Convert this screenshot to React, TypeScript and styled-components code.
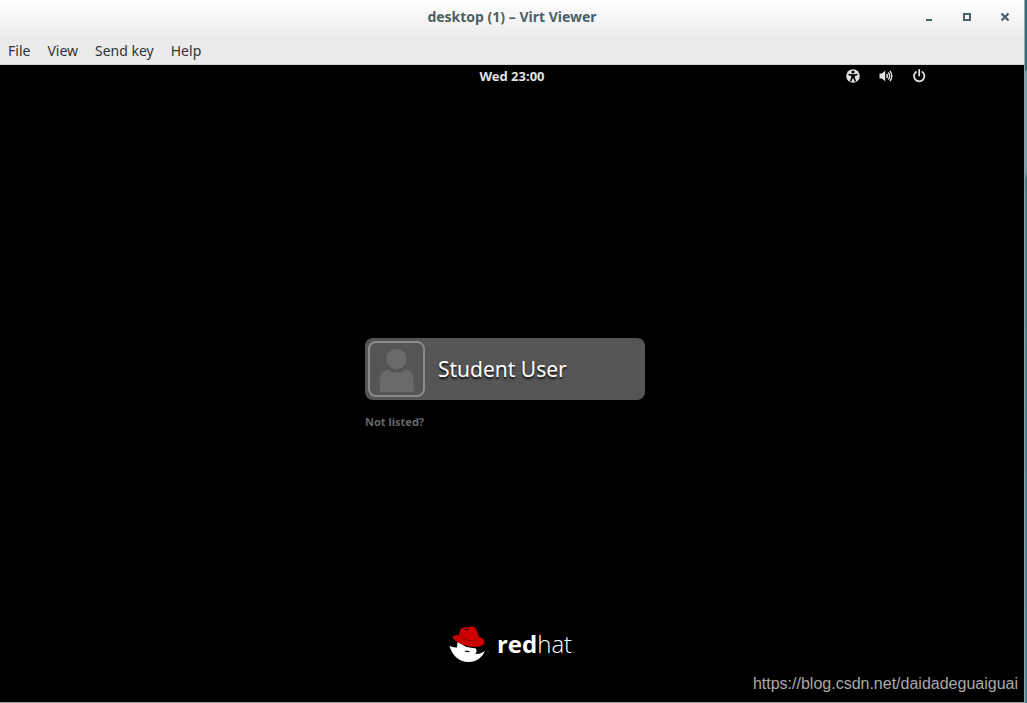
import React from "react";
import styled, { createGlobalStyle } from "styled-components";

const GlobalStyle = createGlobalStyle`
  * { box-sizing: border-box; }
  body { margin: 0; background: #000; font-family: "Noto Sans", "Open Sans", sans-serif; }
  button, a { font: inherit; color: inherit; }
`;

const Desktop = styled.div`
  min-height: 100vh;
  padding-right: 2px;
  display: flex;
  background: linear-gradient(#2f6f85 0, #2f6f85 70px, #6ba3b3 71px, #6ba3b3 170px, #3f7f93 180px, #4688a0 100%);
`;

const Window = styled.div`
  flex: 1;
  display: flex;
  flex-direction: column;
  border-right: 1px solid #a0a0a0;
  border-bottom: 1px solid #a0a0a0;
`;

const Chrome = styled.header`
  background: linear-gradient(#ffffff 0, #ebebeb 38px);
  border-bottom: 1px solid #d2d2d2;
`;

const TitleBar = styled.div`
  display: grid;
  grid-template-columns: 1fr auto 1fr;
  align-items: center;
  height: 34px;
`;

const Title = styled.h1`
  grid-column: 2;
  margin: 0;
  font-size: 14px;
  line-height: 34px;
  font-weight: 700;
  color: #4b5f66;
`;

const WindowButtons = styled.div`
  justify-self: end;
  display: flex;
  gap: 22px;
  padding-right: 11px;
`;

const IconButton = styled.button`
  display: flex;
  padding: 0;
  border: 0;
  background: none;
`;

const MenuBar = styled.nav`
  display: flex;
  gap: 1px;
  padding-top: 4px;
`;

const MenuButton = styled.button`
  border: 0;
  background: none;
  padding: 0 8px;
  font-size: 14px;
  line-height: 26px;
  color: #2e3436;
`;

const Screen = styled.main`
  position: relative;
  flex: 1;
  display: grid;
  grid-template-rows: 1fr auto 1fr;
  background: #000;
`;

const TopBar = styled.div`
  display: grid;
  grid-template-columns: 1fr auto 1fr;
  align-items: center;
  align-self: start;
  height: 22px;
`;

const Clock = styled.time`
  grid-column: 2;
  font-size: 13px;
  line-height: 22px;
  font-weight: 700;
  color: #e2e2e2;
`;

const Status = styled.div`
  justify-self: end;
  display: flex;
  gap: 17px;
  padding-right: 97px;
`;

const LoginRow = styled.div`
  padding-right: 14px;
`;

const Login = styled.section`
  display: flex;
  flex-direction: column;
  align-items: flex-start;
  gap: 14px;
  width: 280px;
  margin: 0 auto;
`;

const UserButton = styled.button`
  display: flex;
  align-items: center;
  gap: 13px;
  width: 100%;
  height: 62px;
  padding: 3px;
  border: 0;
  border-radius: 8px;
  background: #555;
`;

const Avatar = styled.span`
  display: flex;
  align-items: flex-end;
  justify-content: center;
  width: 57px;
  height: 56px;
  padding-bottom: 3px;
  border: 2px solid #8b8b8b;
  border-radius: 8px;
`;

const UserName = styled.span`
  font-size: 21px;
  line-height: 30px;
  color: #fff;
  text-shadow: 0 2px 2px #111;
`;

const NotListed = styled.button`
  padding: 0;
  border: 0;
  background: none;
  font-size: 11px;
  line-height: 16px;
  font-weight: 700;
  color: #666;
`;

const Brand = styled.footer`
  display: flex;
  align-items: center;
  align-self: end;
  justify-content: center;
  gap: 8px;
  padding-bottom: 40px;
`;

const Wordmark = styled.span`
  font-family: "Open Sans", sans-serif;
  font-size: 24px;
  line-height: 36px;
  font-weight: 300;
  color: #fff;
`;

const Strong = styled.b`
  font-weight: 700;
`;

const Dot = styled.span`
  font-size: 12px;
  line-height: 12px;
  color: #999;
`;

const Watermark = styled.a`
  position: absolute;
  right: 6px;
  bottom: 8px;
  font-family: "Liberation Sans", Arial, sans-serif;
  font-size: 16px;
  line-height: 20px;
  color: #aaa;
  text-decoration: none;
`;

function MinimizeIcon() {
  return (
    <svg width="16" height="16" viewBox="0 0 16 16">
      <path d="M5 10h6v2H5z" fill="#4b5f66" />
    </svg>
  );
}

function MaximizeIcon() {
  return (
    <svg width="16" height="16" viewBox="0 0 16 16">
      <path d="M5 5h6v6H5z" fill="none" stroke="#4b5f66" strokeWidth="2" />
    </svg>
  );
}

function CloseIcon() {
  return (
    <svg width="16" height="16" viewBox="0 0 16 16">
      <path d="M4.500 4.500l7 7M11.500 4.500l-7 7" stroke="#4b5f66" strokeWidth="2.300" />
    </svg>
  );
}

function AccessibilityIcon() {
  return (
    <svg width="16" height="16" viewBox="0 0 16 16">
      <circle cx="8" cy="8" r="6.800" fill="#e2e2e2" />
      <circle cx="8" cy="4" r="1.600" fill="#000" />
      <path d="M3.500 5.800l3 .5h3l3-.5v1.500l-2.700.7v1.600l1.400 3.600-1.400.5L8.400 10.500h-.8l-1.400 3.200-1.400-.5 1.400-3.600V8l-2.700-.7z" fill="#000" />
    </svg>
  );
}

function VolumeIcon() {
  return (
    <svg width="16" height="16" viewBox="0 0 16 16">
      <path d="M1.500 5.500h2.300L7.200 2.800v10.400L3.800 10.500H1.500z" fill="#e2e2e2" />
      <path d="M8.700 6q1.300 2 0 4M10.300 4.300q2.700 3.700 0 7.400M12 2.800q3.600 5.200 0 10.400" fill="none" stroke="#e2e2e2" strokeWidth="1.400" />
    </svg>
  );
}

function PowerIcon() {
  return (
    <svg width="16" height="16" viewBox="0 0 16 16">
      <path d="M5 4a5.200 5.200 0 1 0 6.400 0" fill="none" stroke="#e2e2e2" strokeWidth="1.800" strokeLinecap="round" />
      <path d="M8.200 2v5.500" stroke="#e2e2e2" strokeWidth="1.800" strokeLinecap="round" />
    </svg>
  );
}

function PersonIcon() {
  return (
    <svg width="34" height="44" viewBox="0 0 34 44">
      <circle cx="16.500" cy="11" r="10.200" fill="#6a6a6a" />
      <path d="M8 21.500q2.500-.3 2.500 2.700h12.500q0-3 2.500-2.700 8 1.500 8 9.500v13H0V31q0-8 8-9.500z" fill="#6a6a6a" />
    </svg>
  );
}

function HatLogo() {
  return (
    <svg width="40" height="36" viewBox="0 0 40 36">
      <path d="M.5 20l4 1.200 3.500.3.500-5.500 9 5 9.500 1.500.8 3-1.600 1.700 1.600.8c3.200-.3 5.700-1.400 8.200-3-3 6.500-8.500 11-16.500 11C11 36 3.500 30.500.5 20z" fill="#fff" />
      <path d="M15.500 25l3-.4 2.500.8-1.500.8-3-.2z" fill="#222" />
      <path d="M11.500 3.500C12.500 1.300 15.500 1.200 18 1.700 20.500.2 24.500.2 26 1.500c2 2.500 2.800 5.800 4 9.300 3.500 1 5.800 3.200 5.500 5.700-.5 3.500-6 4.800-12.500 4.200C15 20 6.500 16 4 12c-1-2 1.500-3 5.800-3z" fill="#c00" />
      <path d="M9.500 9.500c2.500 3.500 11 6.300 17.500 4.800" fill="none" stroke="#900000" strokeWidth="1" />
      <path d="M14.500 3.300l4-.6 2 1-3.500.8z" fill="#400000" />
      <circle cx="39" cy="25.500" r=".8" fill="#555" />
    </svg>
  );
}

export default function App() {
  return (
    <>
      <GlobalStyle />
      <Desktop>
        <Window>
          <Chrome>
            <TitleBar>
              <Title>desktop (1) – Virt Viewer</Title>
              <WindowButtons>
                <IconButton aria-label="Minimize"><MinimizeIcon /></IconButton>
                <IconButton aria-label="Maximize"><MaximizeIcon /></IconButton>
                <IconButton aria-label="Close"><CloseIcon /></IconButton>
              </WindowButtons>
            </TitleBar>
            <MenuBar>
              {["File", "View", "Send key", "Help"].map((label) => (
                <MenuButton key={label}>{label}</MenuButton>
              ))}
            </MenuBar>
          </Chrome>
          <Screen>
            <TopBar>
              <Clock>Wed 23:00</Clock>
              <Status>
                <IconButton aria-label="Accessibility"><AccessibilityIcon /></IconButton>
                <IconButton aria-label="Volume"><VolumeIcon /></IconButton>
                <IconButton aria-label="Power"><PowerIcon /></IconButton>
              </Status>
            </TopBar>
            <LoginRow>
              <Login>
                <UserButton>
                  <Avatar><PersonIcon /></Avatar>
                  <UserName>Student User</UserName>
                </UserButton>
                <NotListed>Not listed?</NotListed>
              </Login>
            </LoginRow>
            <Brand>
              <HatLogo />
              <Wordmark><Strong>red</Strong>hat<Dot>.</Dot></Wordmark>
            </Brand>
            <Watermark href="https://blog.csdn.net/daidadeguaiguai">https://blog.csdn.net/daidadeguaiguai</Watermark>
          </Screen>
        </Window>
      </Desktop>
    </>
  );
}
